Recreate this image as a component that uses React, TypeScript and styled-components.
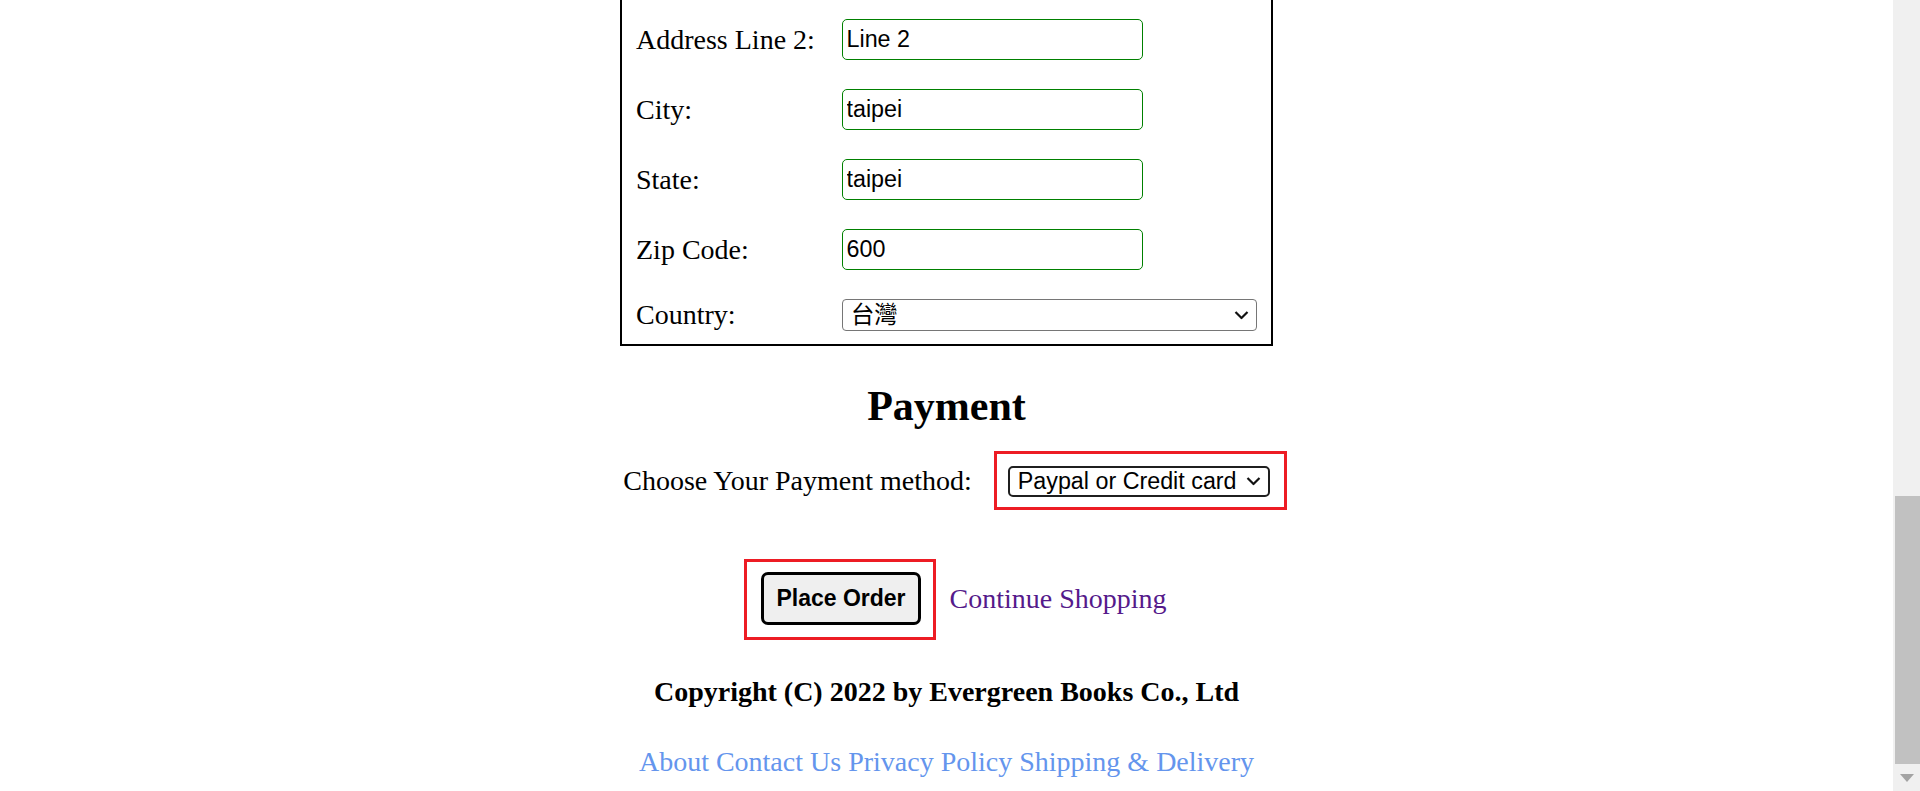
import React from "react";
import styled, { createGlobalStyle } from "styled-components";

const GlobalStyle = createGlobalStyle`
  html, body {
    margin: 0;
    padding: 0;
    background: #ffffff;
    overflow: hidden;
  }
  body {
    font-family: "Liberation Serif", "Times New Roman", serif;
    color: #000000;
  }
`;

const Viewport = styled.div`
  display: flex;
  height: 791px;
  overflow: hidden;
`;

const Main = styled.main`
  flex: 1;
  min-width: 0;
  display: flex;
  flex-direction: column;
  justify-content: flex-end;
  align-items: center;
  padding: 0 8px 13px;
  overflow: hidden;
  font-size: 28px;
  line-height: 32px;

  & > * {
    flex-shrink: 0;
  }
`;

const AddressBox = styled.div`
  width: 653px;
  box-sizing: border-box;
  border: 2px solid #000000;
  padding: 40px 14px 13px;
  display: flex;
  flex-direction: column;
  gap: 29px;
`;

const FieldRow = styled.div`
  display: grid;
  grid-template-columns: 206px 415px;
  align-items: center;
`;

const Label = styled.label`
  font-size: 28px;
  line-height: 32px;
  white-space: nowrap;
`;

const TextInput = styled.input`
  width: 301px;
  height: 41px;
  box-sizing: border-box;
  border: 1.5px solid #008000;
  border-radius: 5px;
  padding: 0 3.5px;
  font-family: "Liberation Sans", Arial, sans-serif;
  font-size: 23.3px;
  color: #000000;
  background: #ffffff;
  outline: none;
`;

const SelectWrap = styled.span<{ $width?: string }>`
  position: relative;
  display: inline-flex;
  width: ${(p) => p.$width ?? "auto"};
`;

const Chevron = styled.svg<{ $right: number }>`
  position: absolute;
  right: ${(p) => p.$right}px;
  top: 50%;
  transform: translateY(-50%);
  pointer-events: none;
`;

const CountrySelect = styled.select`
  appearance: none;
  -webkit-appearance: none;
  width: 100%;
  height: 32px;
  box-sizing: border-box;
  border: 1px solid #767676;
  border-radius: 4px;
  padding: 0 30px 0 8px;
  font-family: "Liberation Sans", "Noto Sans CJK TC", sans-serif;
  font-size: 23.3px;
  color: #000000;
  background: #ffffff;
  outline: none;
`;

const Heading = styled.h2`
  margin: 36px 0 35px;
  width: 100%;
  text-align: center;
  font-size: 42px;
  line-height: 48px;
  font-weight: bold;
`;

const PaymentRow = styled.div`
  display: flex;
  align-items: center;
  justify-content: center;
  gap: 36px;
  height: 32px;
  margin-bottom: 75px;
  width: 100%;
`;

const Annotated = styled.span<{ $t: number; $r: number; $b: number; $l: number }>`
  position: relative;
  display: inline-flex;

  &::after {
    content: "";
    position: absolute;
    top: -${(p) => p.$t}px;
    right: -${(p) => p.$r}px;
    bottom: -${(p) => p.$b}px;
    left: -${(p) => p.$l}px;
    border: 3px solid #ed1c24;
    pointer-events: none;
  }
`;

const PaymentSelect = styled.select`
  appearance: none;
  -webkit-appearance: none;
  width: 262px;
  height: 31px;
  box-sizing: border-box;
  border: 2px solid #1f1f1f;
  border-radius: 5px;
  padding: 0 30px 0 8px;
  font-family: "Liberation Sans", Arial, sans-serif;
  font-size: 23.3px;
  color: #000000;
  background: #ffffff;
  outline: none;
`;

const ActionRow = styled.div`
  display: flex;
  align-items: center;
  justify-content: center;
  gap: 29px;
  padding-left: 35px;
  box-sizing: border-box;
  width: 100%;
  margin-bottom: 51px;
`;

const PlaceOrderButton = styled.button`
  height: 53px;
  box-sizing: border-box;
  padding: 0 12px;
  border: 3px solid #000000;
  border-radius: 7px;
  background: #efefef;
  font-family: "Liberation Sans", Arial, sans-serif;
  font-weight: bold;
  font-size: 23px;
  color: #000000;
  cursor: pointer;
`;

const ContinueLink = styled.a`
  color: #551a8b;
  text-decoration: none;
  font-size: 28px;
  line-height: 32px;
`;

const Copyright = styled.p`
  margin: 0 0 38px;
  width: 100%;
  text-align: center;
  font-weight: bold;
  line-height: 32px;
`;

const FooterNav = styled.nav`
  width: 100%;
  text-align: center;
  line-height: 32px;
`;

const FooterLink = styled.a`
  color: #6495ed;
  text-decoration: none;
`;

const ScrollTrack = styled.div`
  width: 27px;
  flex-shrink: 0;
  background: #f0f0f0;
  display: flex;
  flex-direction: column;
`;

const ThumbArea = styled.div`
  flex: 1;
  display: flex;
  flex-direction: column;
  justify-content: flex-end;
`;

const Thumb = styled.div`
  height: 268px;
  margin-left: 2px;
  background: #c1c1c1;
`;

const ArrowButton = styled.div`
  height: 27px;
  display: flex;
  align-items: center;
  justify-content: center;
  padding-left: 1px;
`;

const ChevronIcon = ({ right }: { right: number }) => (
  <Chevron $right={right} width="15" height="9" viewBox="0 0 15 9">
    <polyline points="1.5,1.5 7.5,7.5 13.5,1.5" fill="none" stroke="#111" strokeWidth="2.2" />
  </Chevron>
);

const addressRows = [
  { id: "line2", label: "Address Line 2:", value: "Line 2" },
  { id: "city", label: "City:", value: "taipei" },
  { id: "state", label: "State:", value: "taipei" },
  { id: "zip", label: "Zip Code:", value: "600" },
];

export default function App() {
  return (
    <>
      <GlobalStyle />
      <Viewport>
        <Main>
          <AddressBox>
            {addressRows.map((row) => (
              <FieldRow key={row.id}>
                <Label htmlFor={row.id}>{row.label}</Label>
                <TextInput id={row.id} defaultValue={row.value} readOnly />
              </FieldRow>
            ))}
            <FieldRow>
              <Label htmlFor="country">Country:</Label>
              <SelectWrap $width="100%">
                <CountrySelect id="country" defaultValue="tw">
                  <option value="tw">台灣</option>
                  <option value="jp">日本</option>
                  <option value="us">United States</option>
                </CountrySelect>
                <ChevronIcon right={8} />
              </SelectWrap>
            </FieldRow>
          </AddressBox>

          <Heading>Payment</Heading>

          <PaymentRow>
            <Label htmlFor="payment">Choose Your Payment method:</Label>
            <Annotated $t={15} $r={17} $b={13} $l={14}>
              <SelectWrap>
                <PaymentSelect id="payment" defaultValue="paypal">
                  <option value="paypal">Paypal or Credit card</option>
                  <option value="cod">Cash on delivery</option>
                </PaymentSelect>
                <ChevronIcon right={9} />
              </SelectWrap>
            </Annotated>
          </PaymentRow>

          <ActionRow>
            <Annotated $t={13} $r={15} $b={15} $l={17}>
              <PlaceOrderButton type="button">Place Order</PlaceOrderButton>
            </Annotated>
            <ContinueLink href="#">Continue Shopping</ContinueLink>
          </ActionRow>

          <Copyright>Copyright (C) 2022 by Evergreen Books Co., Ltd</Copyright>

          <FooterNav>
            <FooterLink href="#">About</FooterLink>{" "}
            <FooterLink href="#">Contact Us</FooterLink>{" "}
            <FooterLink href="#">Privacy Policy</FooterLink>{" "}
            <FooterLink href="#">Shipping &amp; Delivery</FooterLink>
          </FooterNav>
        </Main>
        <ScrollTrack>
          <ThumbArea>
            <Thumb />
          </ThumbArea>
          <ArrowButton>
            <svg width="14" height="8" viewBox="0 0 14 8">
              <polygon points="0,0 14,0 7,8" fill="#a3a3a3" />
            </svg>
          </ArrowButton>
        </ScrollTrack>
      </Viewport>
    </>
  );
}
